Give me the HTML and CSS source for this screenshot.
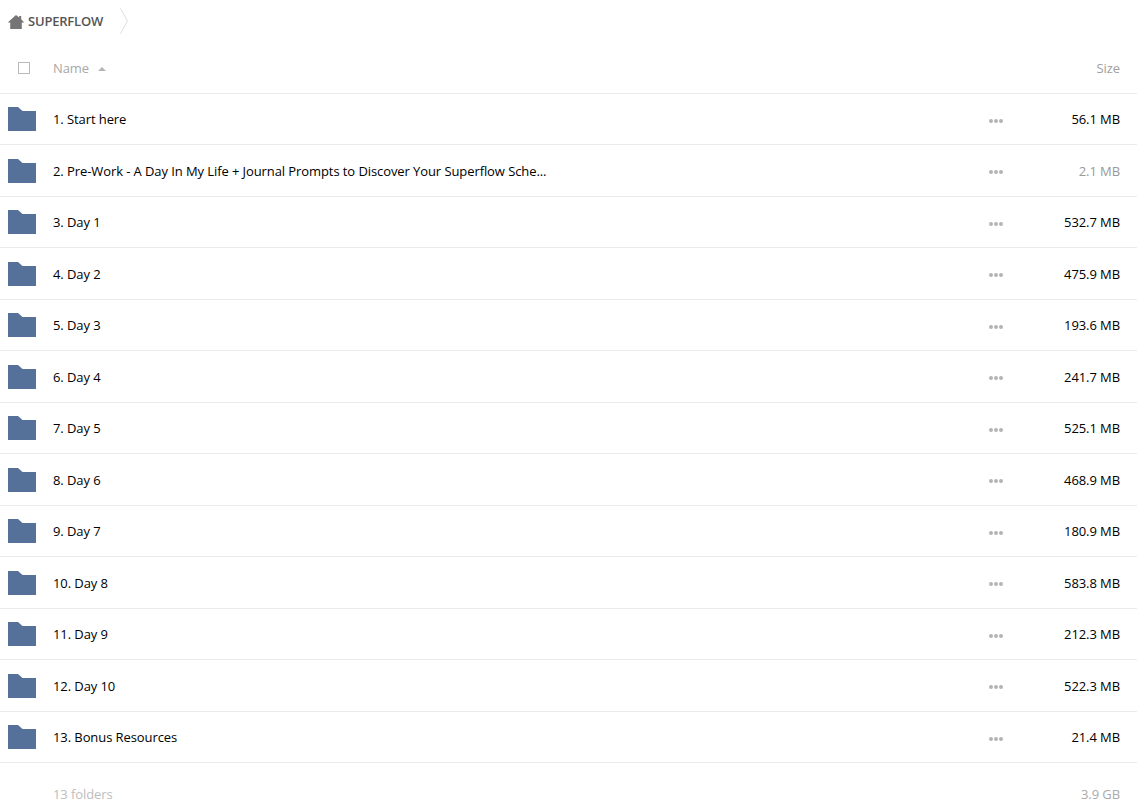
FILE: index.html
```html
<!DOCTYPE html>
<html lang="en">
<head>
<meta charset="utf-8">
<title>SUPERFLOW</title>
<link rel="stylesheet" href="styles.css">
</head>
<body>
<div class="crumbs">
  <svg class="home" viewBox="0 0 16 14" width="16" height="14"><path d="M8 0 L11.2 2.6 V1 H13.2 V4.3 L16 7.2 V7.6 H13.8 V14 H2.2 V7.6 H0 V7.2 Z" fill="#757575"/></svg>
  <span class="crumb-label">SUPERFLOW</span>
  <svg class="chev" viewBox="0 0 8 26" width="8" height="26"><path d="M0.5 0.5 L7.5 13 L0.5 25.5" fill="none" stroke="#dedede"/></svg>
</div>
<div class="head row-grid">
  <div class="cell-icon"><span class="check"></span></div>
  <div class="head-name">Name <span class="sort"></span></div>
  <div class="head-size">Size</div>
</div>
<div class="list">
  <div class="row row-grid"><div class="cell-icon"><svg class="folder" viewBox="0 0 28 24"><path d="M0 0 H10 L14.5 4 H28 V24 H0 Z"/></svg></div><div class="name">1. Start here</div><div class="dots"><i></i><i></i><i></i></div><div class="size">56.1 MB</div></div>
  <div class="row row-grid"><div class="cell-icon"><svg class="folder" viewBox="0 0 28 24"><path d="M0 0 H10 L14.5 4 H28 V24 H0 Z"/></svg></div><div class="name">2. Pre-Work - A Day In My Life + Journal Prompts to Discover Your Superflow Sche...</div><div class="dots"><i></i><i></i><i></i></div><div class="size muted">2.1 MB</div></div>
  <div class="row row-grid"><div class="cell-icon"><svg class="folder" viewBox="0 0 28 24"><path d="M0 0 H10 L14.5 4 H28 V24 H0 Z"/></svg></div><div class="name">3. Day 1</div><div class="dots"><i></i><i></i><i></i></div><div class="size">532.7 MB</div></div>
  <div class="row row-grid"><div class="cell-icon"><svg class="folder" viewBox="0 0 28 24"><path d="M0 0 H10 L14.5 4 H28 V24 H0 Z"/></svg></div><div class="name">4. Day 2</div><div class="dots"><i></i><i></i><i></i></div><div class="size">475.9 MB</div></div>
  <div class="row row-grid"><div class="cell-icon"><svg class="folder" viewBox="0 0 28 24"><path d="M0 0 H10 L14.5 4 H28 V24 H0 Z"/></svg></div><div class="name">5. Day 3</div><div class="dots"><i></i><i></i><i></i></div><div class="size">193.6 MB</div></div>
  <div class="row row-grid"><div class="cell-icon"><svg class="folder" viewBox="0 0 28 24"><path d="M0 0 H10 L14.5 4 H28 V24 H0 Z"/></svg></div><div class="name">6. Day 4</div><div class="dots"><i></i><i></i><i></i></div><div class="size">241.7 MB</div></div>
  <div class="row row-grid"><div class="cell-icon"><svg class="folder" viewBox="0 0 28 24"><path d="M0 0 H10 L14.5 4 H28 V24 H0 Z"/></svg></div><div class="name">7. Day 5</div><div class="dots"><i></i><i></i><i></i></div><div class="size">525.1 MB</div></div>
  <div class="row row-grid"><div class="cell-icon"><svg class="folder" viewBox="0 0 28 24"><path d="M0 0 H10 L14.5 4 H28 V24 H0 Z"/></svg></div><div class="name">8. Day 6</div><div class="dots"><i></i><i></i><i></i></div><div class="size">468.9 MB</div></div>
  <div class="row row-grid"><div class="cell-icon"><svg class="folder" viewBox="0 0 28 24"><path d="M0 0 H10 L14.5 4 H28 V24 H0 Z"/></svg></div><div class="name">9. Day 7</div><div class="dots"><i></i><i></i><i></i></div><div class="size">180.9 MB</div></div>
  <div class="row row-grid"><div class="cell-icon"><svg class="folder" viewBox="0 0 28 24"><path d="M0 0 H10 L14.5 4 H28 V24 H0 Z"/></svg></div><div class="name">10. Day 8</div><div class="dots"><i></i><i></i><i></i></div><div class="size">583.8 MB</div></div>
  <div class="row row-grid"><div class="cell-icon"><svg class="folder" viewBox="0 0 28 24"><path d="M0 0 H10 L14.5 4 H28 V24 H0 Z"/></svg></div><div class="name">11. Day 9</div><div class="dots"><i></i><i></i><i></i></div><div class="size">212.3 MB</div></div>
  <div class="row row-grid"><div class="cell-icon"><svg class="folder" viewBox="0 0 28 24"><path d="M0 0 H10 L14.5 4 H28 V24 H0 Z"/></svg></div><div class="name">12. Day 10</div><div class="dots"><i></i><i></i><i></i></div><div class="size">522.3 MB</div></div>
  <div class="row row-grid"><div class="cell-icon"><svg class="folder" viewBox="0 0 28 24"><path d="M0 0 H10 L14.5 4 H28 V24 H0 Z"/></svg></div><div class="name">13. Bonus Resources</div><div class="dots"><i></i><i></i><i></i></div><div class="size">21.4 MB</div></div>
</div>
<div class="foot row-grid">
  <div class="cell-icon"></div>
  <div class="foot-name">13 folders</div>
  <div class="foot-size">3.9 GB</div>
</div>
</body>
</html>
```
FILE: styles.css
```css
html, body {
  margin: 0;
  padding: 0;
  height: 810px;
  overflow: hidden;
  background: #fff;
  font-family: "Open Sans", sans-serif;
  font-size: 13px;
  letter-spacing: -0.085px;
  color: #000;
}
.crumbs {
  display: flex;
  align-items: center;
  height: 43px;
  padding-left: 8px;
  box-sizing: border-box;
}
.home { flex: none; margin-right: 4px; }
.crumb-label {
  font-size: 13px;
  font-weight: 600;
  color: #555;
  width: 76px;
  margin-top: -2px;
  letter-spacing: -0.2px;
}
.chev { flex: none; margin-left: 16px; margin-top: -2px; }
.row-grid {
  display: flex;
  align-items: center;
  padding-right: 17px;
}
.cell-icon {
  flex: none;
  width: 53px;
  display: flex;
  padding-left: 8px;
  box-sizing: border-box;
}
.head {
  height: 50.6px;
  box-sizing: border-box;
  border-bottom: 1px solid #ebebeb;
}
.check {
  display: block;
  width: 10px;
  height: 10px;
  margin-left: 10px;
  border: 1px solid #b9b9b9;
}
.head-name {
  flex: 1;
  color: #a8a8a8;
  display: flex;
  align-items: center;
  gap: 9px;
}
.sort {
  width: 0;
  height: 0;
  margin-top: 2px;
  border: 4px solid transparent;
  border-top: 0;
  border-bottom: 4px solid #b5b5b5;
}
.head-size { color: #a0a0a0; }
.row {
  height: 51.5px;
  padding-top: 0.6px;
  box-sizing: border-box;
  border-bottom: 1px solid #ebebeb;
}
.folder {
  display: block;
  width: 28px;
  height: 24px;
  fill: #557199;
}
.name {
  flex: 1;
  white-space: nowrap;
  color: #000;
}
.dots {
  flex: none;
  display: flex;
  gap: 1px;
  margin-top: 3px;
  margin-right: 61px;
}
.dots i {
  display: block;
  width: 4px;
  height: 4px;
  border-radius: 50%;
  background: #b4b4b4;
}
.size {
  flex: none;
  width: 56px;
  text-align: right;
  white-space: nowrap;
}
.muted { color: #999; }
.foot {
  height: 47px;
  padding-top: 22px;
  box-sizing: border-box;
  align-items: flex-start;
  color: #bdbdbd;
}
.foot-name { flex: 1; line-height: 18px; }
.foot-size { line-height: 18px; color: #aaa; }
```
